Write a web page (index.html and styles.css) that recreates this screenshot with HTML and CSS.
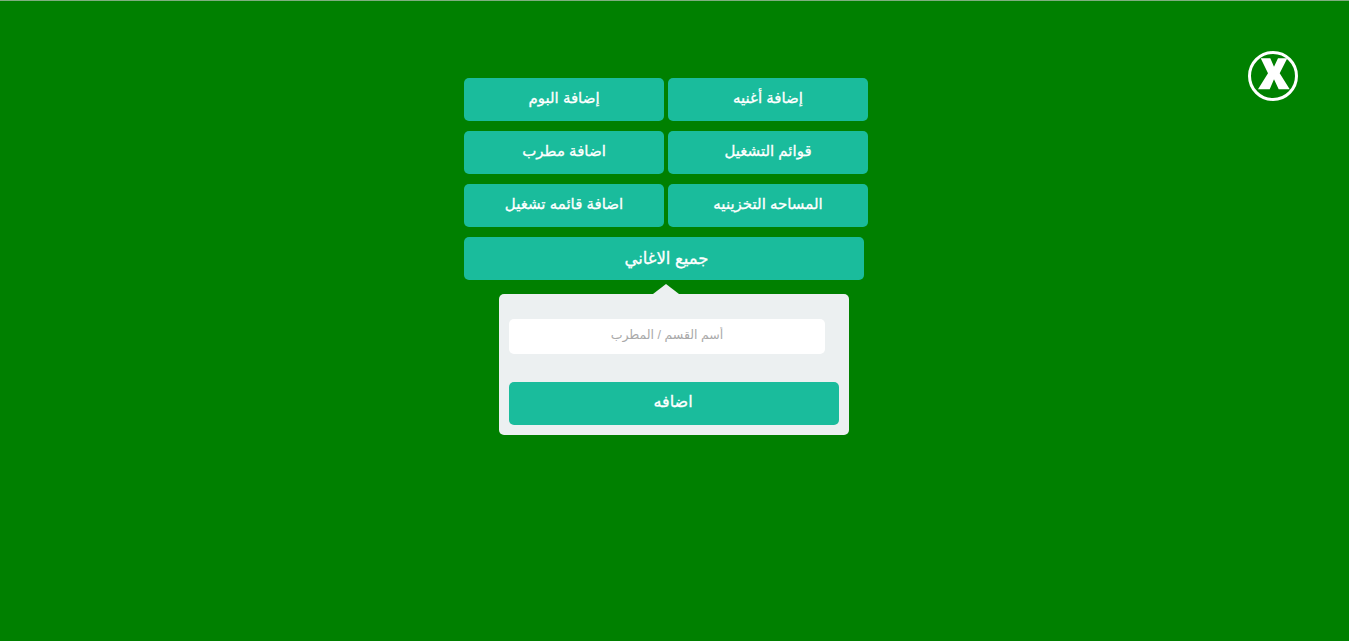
FILE: index.html
```html
<!DOCTYPE html>
<html lang="ar" dir="rtl">
<head>
	<meta charset="UTF-8">
	<meta name="viewport" content="width=device-width, initial-scale=1.0">
	<title>لوحة التحكم</title>
	<link rel="stylesheet" href="styles.css">
</head>
<body>
	<a class="close" href="#" aria-label="اغلاق">
		<svg width="50" height="50" viewBox="0 0 50 50">
			<circle cx="25" cy="25" r="23.5" fill="none" stroke="#fff" stroke-width="3"/>
			<path d="M12.700 7.300H22.300L26 15.700L30 7.300H39.300L31.700 22.300L41.700 38.300H30.700L26 28.300L21.700 38.300H10L20 22.300Z" fill="#fff"/>
		</svg>
	</a>
	<div class="menu">
		<a class="btn" href="#">إضافة أغنيه</a>
		<a class="btn" href="#">إضافة البوم</a>
		<a class="btn" href="#">قوائم التشغيل</a>
		<a class="btn" href="#">اضافة مطرب</a>
		<a class="btn" href="#">المساحه التخزينيه</a>
		<a class="btn" href="#">اضافة قائمه تشغيل</a>
		<a class="btn btn-wide" href="#">جميع الاغاني</a>
	</div>
	<form class="panel">
		<input class="field" type="text" placeholder="أسم القسم / المطرب">
		<button class="btn btn-submit" type="button">اضافه</button>
	</form>
</body>
</html>
```

FILE: styles.css
```css
* {
	box-sizing: border-box;
}
html, body {
	height: 100%;
}
body {
	margin: 0;
	padding-top: 77px;
	background: #008000;
	border-top: 1px solid #7fae7f;
	font-family: "Liberation Sans", Arial, "Noto Sans", "DejaVu Sans", sans-serif;
	overflow: hidden;
	position: relative;
}
.close {
	position: absolute;
	top: 50px;
	right: 51px;
	display: block;
	width: 50px;
	height: 50px;
}
.close svg {
	display: block;
}
.menu {
	display: grid;
	grid-template-columns: 200px 200px;
	gap: 10px 4px;
	width: 404px;
	margin-right: 481px;
}
.btn {
	display: flex;
	align-items: center;
	justify-content: center;
	height: 43px;
	padding-bottom: 4px;
	background: #1abc9c;
	border: 0;
	border-radius: 5px;
	color: #fff;
	font-family: inherit;
	font-size: 15px;
	font-weight: normal;
	-webkit-text-stroke: 0.3px #fff;
	text-decoration: none;
}
.btn-wide {
	grid-column: 1 / 3;
	justify-self: end;
	width: 400px;
	padding-bottom: 0;
	padding-left: 5px;
	font-size: 16.5px;
}
.panel {
	position: relative;
	width: 350px;
	height: 141px;
	margin: 14px 500px 0 0;
	padding: 25px 10px 10px;
	background: #ecf0f1;
	border-radius: 5px;
}
.panel::before {
	content: "";
	position: absolute;
	top: -10px;
	left: 154px;
	border-left: 13px solid transparent;
	border-right: 13px solid transparent;
	border-bottom: 10px solid #ecf0f1;
}
.field {
	display: block;
	width: 316px;
	height: 35px;
	margin: 0 auto 28px 0;
	padding: 0 10px 4px;
	background: #fff;
	border: 0;
	border-radius: 5px;
	font-family: inherit;
	font-size: 12.5px;
	text-align: center;
}
.field::placeholder {
	color: #aaa;
}
.btn-submit {
	width: 330px;
	padding-bottom: 5px;
	padding-right: 8px;
	font-size: 16px;
}
```
